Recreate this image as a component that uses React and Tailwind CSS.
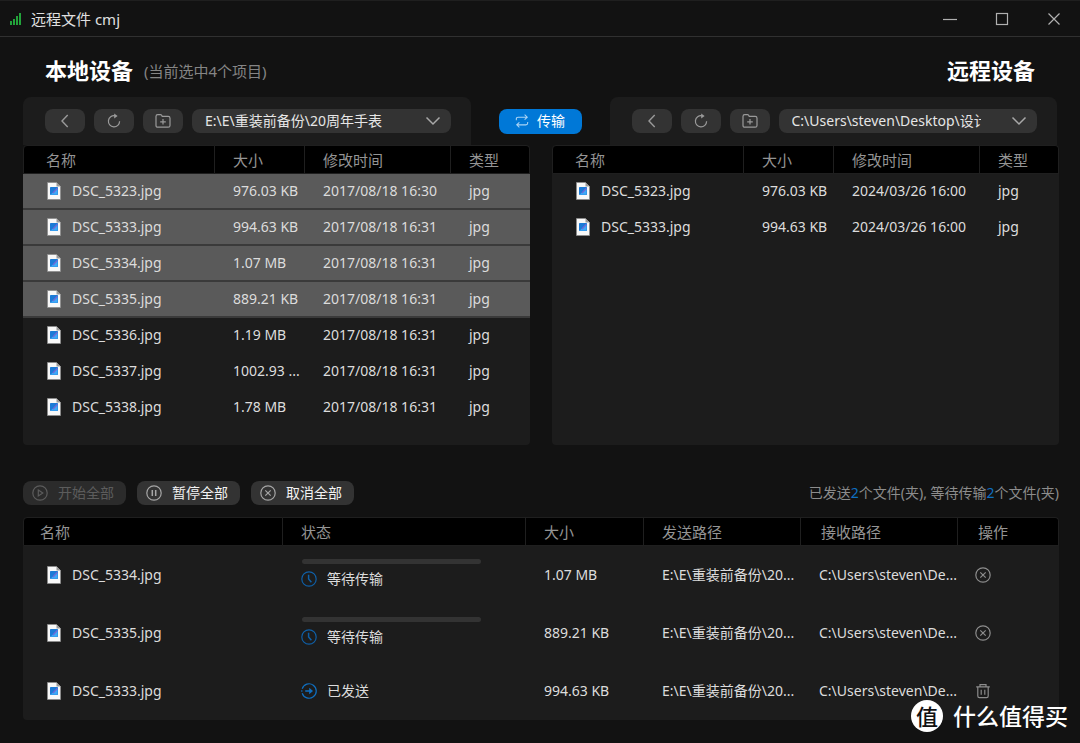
import React, { useState } from 'react'

const localFiles = [
  { name: 'DSC_5323.jpg', size: '976.03 KB', date: '2017/08/18 16:30', selected: true },
  { name: 'DSC_5333.jpg', size: '994.63 KB', date: '2017/08/18 16:31', selected: true },
  { name: 'DSC_5334.jpg', size: '1.07 MB', date: '2017/08/18 16:31', selected: true },
  { name: 'DSC_5335.jpg', size: '889.21 KB', date: '2017/08/18 16:31', selected: true },
  { name: 'DSC_5336.jpg', size: '1.19 MB', date: '2017/08/18 16:31' },
  { name: 'DSC_5337.jpg', size: '1002.93 ...', date: '2017/08/18 16:31' },
  { name: 'DSC_5338.jpg', size: '1.78 MB', date: '2017/08/18 16:31' },
]

const remoteFiles = [
  { name: 'DSC_5323.jpg', size: '976.03 KB', date: '2024/03/26 16:00' },
  { name: 'DSC_5333.jpg', size: '994.63 KB', date: '2024/03/26 16:00' },
]

const localPath = 'E:\\E\\重装前备份\\20周年手表'
const remotePath = 'C:\\Users\\steven\\Desktop\\设计'

const transfers = [
  { name: 'DSC_5334.jpg', size: '1.07 MB', done: false },
  { name: 'DSC_5335.jpg', size: '889.21 KB', done: false },
  { name: 'DSC_5333.jpg', size: '994.63 KB', done: true },
]

const shorten = (path, length) => `${path.slice(0, length)}...`

function Icon({ size = 16, className = '', children }) {
  return (
    <svg
      width={size}
      height={size}
      viewBox="0 0 16 16"
      fill="none"
      stroke="currentColor"
      strokeWidth="1.2"
      className={`shrink-0 ${className}`}
      aria-hidden="true"
    >
      {children}
    </svg>
  )
}

function FileIcon() {
  return (
    <svg width="14" height="18" viewBox="0 0 14 18" className="shrink-0" aria-hidden="true">
      <path d="M0.5 0.5H9.5L13.5 4.5V17.5H0.5Z" fill="#f8f8f8" stroke="#8d8d8d" strokeWidth="0.8" />
      <path d="M9.5 0.5V4.5H13.5Z" fill="#9a9a9a" />
      <rect x="3" y="5" width="8" height="8" rx="0.8" fill="#1b7ad6" />
      <path d="M3.4 12.8L10.6 6.5V12Q10.6 12.8 9.8 12.8Z" fill="#3fa9f7" />
      <path d="M6 11L10.4 6.2" stroke="#6f6ad6" strokeWidth="1.4" />
    </svg>
  )
}

function CancelIcon() {
  return (
    <Icon>
      <circle cx="8" cy="8" r="7.2" />
      <path d="M5.3 5.3L10.7 10.7M10.7 5.3L5.3 10.7" />
    </Icon>
  )
}

function ToolButton({ label, children }) {
  return (
    <button
      type="button"
      aria-label={label}
      className="flex h-6 w-10 shrink-0 items-center justify-center rounded-lg bg-[#333333] text-[#9a9a9a] hover:bg-[#3d3d3d]"
    >
      {children}
    </button>
  )
}

function Toolbar({ label, path }) {
  return (
    <div className="flex h-12 min-w-0 flex-1 items-center gap-[9px] rounded-t-lg bg-[#1c1c1c] pl-[22px] pr-5">
      <ToolButton label="返回">
        <Icon><path d="M10.7 2L5 8L10.7 14" strokeWidth="1.4" /></Icon>
      </ToolButton>
      <ToolButton label="刷新">
        <Icon>
          <path d="M9 2.8A5.6 5.6 0 1 0 13.6 8.3" />
          <path d="M8.2 0.4L11.6 2.9L8.2 5.4Z" fill="currentColor" stroke="none" />
        </Icon>
      </ToolButton>
      <ToolButton label="新建文件夹">
        <Icon>
          <path d="M1 3.4Q1 1.6 2.8 1.6H5.4Q6.2 1.6 6.6 2.3L7.2 3.4H13.2Q15 3.4 15 5.2V12.4Q15 14.2 13.2 14.2H2.8Q1 14.2 1 12.4Z" />
          <path d="M5.2 8.8H10.8M8 6V11.6" />
        </Icon>
      </ToolButton>
      <div className="relative min-w-0 flex-1">
        <select
          aria-label={label}
          className="block h-6 w-full appearance-none rounded-lg bg-[#333333] pl-[13px] pr-14 text-sm leading-6 text-[#e6e6e6] outline-none"
        >
          <option>{path}</option>
        </select>
        <Icon className="pointer-events-none absolute right-[10px] top-1 text-[#a8a8a8]">
          <path d="M1.5 4.5L8 11L14.5 4.5" strokeWidth="1.5" />
        </Icon>
      </div>
    </div>
  )
}

function Th({ children, className = 'pl-[18px]' }) {
  return (
    <th className={`h-[29px] border-y border-r border-[#1f1f1f] bg-black text-left text-[15px] font-normal leading-6 text-[#949494] ${className}`}>
      {children}
    </th>
  )
}

function FileTable({ files, label }) {
  return (
    <div className="min-h-[300px] min-w-0 flex-1 overflow-hidden rounded bg-[#1c1c1c]">
      <table aria-label={label} className="w-full table-fixed border-separate border-spacing-0">
        <colgroup>
          <col />
          <col className="w-[90px]" />
          <col className="w-[146px]" />
          <col className="w-[79px]" />
        </colgroup>
        <thead>
          <tr>
            <Th className="rounded-tl border-l pl-[22px]">名称</Th>
            <Th>大小</Th>
            <Th>修改时间</Th>
            <Th className="rounded-tr pl-[18px]">类型</Th>
          </tr>
        </thead>
        <tbody>
          {files.map((file) => (
            <tr
              key={file.name}
              aria-selected={Boolean(file.selected)}
              className={file.selected ? 'bg-[#5a5a5a] *:border-b-2 *:border-[#3a3a3a]' : '*:border-b-2 *:border-transparent'}
            >
              <td className="h-9 pl-6">
                <div className="flex items-center gap-[11px]">
                  <FileIcon />
                  <span className="truncate">{file.name}</span>
                </div>
              </td>
              <td className="whitespace-nowrap pl-[18px]">{file.size}</td>
              <td className="whitespace-nowrap pl-[18px]">{file.date}</td>
              <td className="whitespace-nowrap pl-[18px]">jpg</td>
            </tr>
          ))}
        </tbody>
      </table>
    </div>
  )
}

function QueueButton({ icon, children, disabled, onClick }) {
  return (
    <button
      type="button"
      disabled={disabled}
      onClick={onClick}
      className="flex h-6 items-center gap-[10px] rounded-lg bg-[#333333] pl-[9px] pr-3 text-sm leading-6 text-[#f2f2f2] disabled:bg-[#2b2b2b] disabled:text-[#5c5c5c]"
    >
      <span className={disabled ? 'text-[#5c5c5c]' : 'text-[#a6a6a6]'}>{icon}</span>
      {children}
    </button>
  )
}

function TransferStatus({ done }) {
  if (done) {
    return (
      <div className="flex items-center gap-[10px]">
        <Icon className="text-[#0f6fc0]">
          <path d="M1.2 5.8A7.2 7.2 0 1 1 1.2 10.2" />
          <path d="M0.8 7.2V8.8" />
          <path d="M4.2 8H9" strokeWidth="1.6" />
          <path d="M8.2 4.8L12 8L8.2 11.2Z" fill="currentColor" stroke="none" />
        </Icon>
        已发送
      </div>
    )
  }
  return (
    <div className="flex flex-col gap-[5px] pb-0.5">
      <progress
        aria-label="传输进度"
        value="0"
        max="100"
        className="ml-px h-[5px] w-[179px] appearance-none overflow-hidden rounded-full bg-[#333333] [&::-webkit-progress-bar]:bg-[#333333]"
      />
      <div className="flex items-center gap-[10px]">
        <Icon className="text-[#0f5fa6]">
          <circle cx="8" cy="8" r="7.2" />
          <path d="M7.6 3.8V8L10.4 11.2" strokeWidth="1.5" />
        </Icon>
        等待传输
      </div>
    </div>
  )
}

function TransferTable() {
  return (
    <div className="overflow-hidden rounded bg-[#1c1c1c]">
      <table aria-label="传输列表" className="w-full table-fixed border-separate border-spacing-0">
        <colgroup>
          <col />
          <col className="w-[243px]" />
          <col className="w-[118px]" />
          <col className="w-[157px]" />
          <col className="w-[157px]" />
          <col className="w-[101px]" />
        </colgroup>
        <thead>
          <tr>
            <Th className="rounded-tl border-l pl-4">名称</Th>
            <Th>状态</Th>
            <Th>大小</Th>
            <Th>发送路径</Th>
            <Th className="pl-5">接收路径</Th>
            <Th className="rounded-tr pl-5">操作</Th>
          </tr>
        </thead>
        <tbody>
          {transfers.map((item) => (
            <tr key={item.name}>
              <td className="h-[58px] pl-6">
                <div className="flex items-center gap-[11px]">
                  <FileIcon />
                  <span className="truncate">{item.name}</span>
                </div>
              </td>
              <td className="pl-[18px]"><TransferStatus done={item.done} /></td>
              <td className="whitespace-nowrap pl-[18px]">{item.size}</td>
              <td title={localPath} className="whitespace-nowrap pl-[18px]">{shorten(localPath, 13)}</td>
              <td title={remotePath} className="whitespace-nowrap pl-[18px]">{shorten(remotePath, 18)}</td>
              <td className="pl-[17px]">
                <button type="button" aria-label={item.done ? '删除记录' : '取消传输'} className="flex text-[#8c8c8c]">
                  {item.done ? (
                    <Icon>
                      <path d="M1.2 3.8H14.8M5 3.6V1.6H11V3.6" />
                      <path d="M2.8 4V13Q2.8 14.6 4.4 14.6H11.6Q13.2 14.6 13.2 13V4" />
                      <path d="M6.2 6.8V11.8M9.8 6.8V11.8" />
                    </Icon>
                  ) : (
                    <CancelIcon />
                  )}
                </button>
              </td>
            </tr>
          ))}
        </tbody>
      </table>
    </div>
  )
}

export default function App() {
  const [paused, setPaused] = useState(false)

  return (
    <div className="relative min-h-screen bg-[#121212] pb-[22px] font-['Noto_Sans','Noto_Sans_CJK_SC',sans-serif] text-sm leading-5 text-[#dcdcdc]">

      {/* Title bar */}
      <header className="flex h-[37px] items-center border-y border-t-[#1f1f1f] border-b-[#303030] pl-[9px] pr-[18px]">
        <svg width="13" height="12" viewBox="0 0 13 12" fill="#22a33a" className="mr-[9px]" aria-hidden="true">
          <rect x="1" y="8" width="2" height="4" />
          <rect x="4" y="6" width="2" height="6" />
          <rect x="7" y="3" width="2" height="9" />
          <rect x="10" y="0" width="2" height="12" />
        </svg>
        <span className="text-[15px] text-[#e0e0e0]">远程文件 cmj</span>
        <div className="ml-auto flex gap-9 text-[#b0b0b0]">
          <button type="button" aria-label="最小化">
            <Icon><path d="M1 8.5H15" /></Icon>
          </button>
          <button type="button" aria-label="最大化">
            <Icon><rect x="2.5" y="2.5" width="11" height="11" /></Icon>
          </button>
          <button type="button" aria-label="关闭">
            <Icon><path d="M2.5 2.5L13.5 13.5M13.5 2.5L2.5 13.5" /></Icon>
          </button>
        </div>
      </header>

      <main className="pl-[23px] pr-[21px]">
        <div className="flex h-[60px] items-center justify-between pl-[22px] pr-6 pt-1.5">
          <div className="flex items-center gap-[11px]">
            <h2 className="text-[22px] font-bold leading-8 text-white">本地设备</h2>
            <span className="pt-0.5 text-[15px] text-[#858585]">(当前选中4个项目)</span>
          </div>
          <h2 className="text-[22px] font-bold leading-8 text-white">远程设备</h2>
        </div>

        <div className="flex items-center gap-7 pr-0.5">
          <Toolbar label="本地路径" path={localPath} />
          <button
            type="button"
            className="flex h-[25px] w-[83px] items-center justify-center gap-2 rounded-lg bg-[#0078d7] text-sm text-white hover:bg-[#1a86dd]"
          >
            <Icon size={14} className="text-[#a9d3f5]">
              <path d="M1.5 7V5.6Q1.5 3.6 3.5 3.6H14M11 0.8L14 3.6L11 6.4" />
              <path d="M14.5 9V10.4Q14.5 12.4 12.5 12.4H2M5 9.6L2 12.4L5 15.2" />
            </Icon>
            传输
          </button>
          <Toolbar label="远程路径" path={remotePath} />
        </div>

        <div className="flex gap-[22px]">
          <FileTable files={localFiles} label="本地文件" />
          <FileTable files={remoteFiles} label="远程文件" />
        </div>

        {/* Transfer queue */}
        <div className="flex items-center justify-between pb-3 pt-9">
          <div className="flex gap-[11px]">
            <QueueButton
              disabled={!paused}
              onClick={() => setPaused(false)}
              icon={
                <Icon>
                  <circle cx="8" cy="8" r="7.2" />
                  <path d="M6.3 5L10.8 8L6.3 11Z" />
                </Icon>
              }
            >
              开始全部
            </QueueButton>
            <QueueButton
              onClick={() => setPaused(true)}
              icon={
                <Icon>
                  <circle cx="8" cy="8" r="7.2" />
                  <path d="M6.3 5V11M9.7 5V11" strokeWidth="1.5" />
                </Icon>
              }
            >
              暂停全部
            </QueueButton>
            <QueueButton icon={<CancelIcon />}>取消全部</QueueButton>
          </div>
          <p className="text-[#8c8c8c]">
            已发送<span className="text-[#0f6fc0]">2</span>个文件(夹), 等待传输<span className="text-[#0f6fc0]">2</span>个文件(夹)
          </p>
        </div>

        <TransferTable />
      </main>

      {/* Watermark */}
      <div className="pointer-events-none absolute bottom-[11px] right-3 flex items-center gap-[10px] text-white">
        <span className="flex size-8 items-center justify-center rounded-full bg-white text-[22px] font-medium leading-8 text-[#111111]">值</span>
        <span className="text-[23px] font-medium leading-8">什么值得买</span>
      </div>
    </div>
  )
}
